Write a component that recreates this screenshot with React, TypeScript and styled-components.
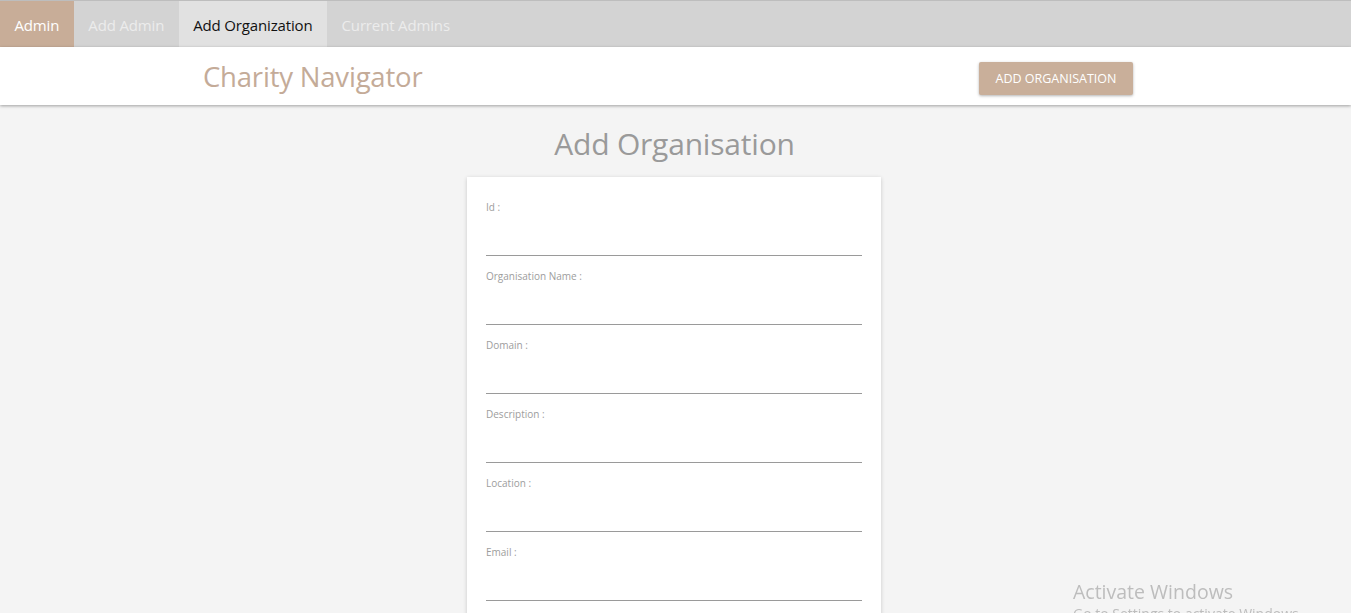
import React from "react";
import styled, { createGlobalStyle } from "styled-components";

const Global = createGlobalStyle`
  html, body { margin: 0; padding: 0; }
  body {
    background: #f4f4f4;
    font-family: "Open Sans", "Noto Sans", sans-serif;
    overflow: hidden;
  }
  * { box-sizing: border-box; }
`;

const NavBar = styled.nav`
  display: flex;
  height: 47px;
  background: #d3d3d3;
  border-top: 1px solid #bdbdbd;
`;

const Tab = styled.a<{ $variant?: "brand" | "active" | "idle" }>`
  display: flex;
  align-items: center;
  padding: 1px 14.5px 0;
  font-size: 15px;
  letter-spacing: -0.15px;
  text-decoration: none;
  cursor: pointer;
  background: ${(p) =>
    p.$variant === "brand" ? "#c8ad98" : p.$variant === "active" ? "#e1e1e1" : "transparent"};
  color: ${(p) =>
    p.$variant === "brand" ? "#ffffff" : p.$variant === "active" ? "#111111" : "#ececec"};
`;

const Header = styled.header`
  display: flex;
  align-items: center;
  justify-content: space-between;
  height: 58px;
  padding: 0 218px 0 203px;
  background: #ffffff;
  box-shadow: 0 1px 3px rgba(0, 0, 0, 0.35);
  position: relative;
  z-index: 1;
`;

const Brand = styled.div`
  font-size: 27.5px;
  color: #c4ab98;
  letter-spacing: -0.2px;
  margin-top: 1px;
`;

const PrimaryButton = styled.button`
  width: 154px;
  height: 33px;
  margin-top: 4px;
  border: none;
  border-radius: 2px;
  background: #c9af9a;
  color: #ffffff;
  font-family: inherit;
  font-size: 12.5px;
  text-transform: uppercase;
  box-shadow: 0 1px 3px rgba(0, 0, 0, 0.3);
  cursor: pointer;
`;

const Main = styled.main`
  display: flex;
  flex-direction: column;
  align-items: center;
  padding-top: 19px;
`;

const Title = styled.h1`
  margin: 0 0 13px;
  font-size: 30px;
  font-weight: 400;
  line-height: 40px;
  color: #9a9a9a;
  letter-spacing: -0.2px;
  margin-left: -2px;
`;

const Card = styled.form`
  width: 414px;
  margin-left: -3px;
  padding: 22px 19px 30px;
  background: #ffffff;
  box-shadow: 0 1px 4px rgba(0, 0, 0, 0.18);
  display: flex;
  flex-direction: column;
  gap: 12px;
`;

const Field = styled.label`
  display: flex;
  flex-direction: column;
`;

const Label = styled.span`
  font-size: 10px;
  line-height: 16px;
  color: #9d9d9d;
`;

const Input = styled.input`
  height: 41px;
  border: none;
  border-bottom: 1px solid #9a9a9a;
  background: transparent;
  outline: none;
  font-family: inherit;
  font-size: 13px;
  padding: 0;
`;

const Watermark = styled.div`
  position: fixed;
  left: 1073px;
  top: 581px;
  color: #bdbdbd;
  pointer-events: none;
  line-height: 1;
`;

const WatermarkTitle = styled.div`
  font-size: 19.5px;
  line-height: 22px;
`;

const WatermarkSub = styled.div`
  font-size: 14px;
  line-height: 18px;
  margin-top: 2px;
`;

const fields = ["Id :", "Organisation Name :", "Domain :", "Description :", "Location :", "Email :"];

export default function App() {
  return (
    <>
      <Global />
      <NavBar>
        <Tab $variant="brand">Admin</Tab>
        <Tab>Add Admin</Tab>
        <Tab $variant="active">Add Organization</Tab>
        <Tab>Current Admins</Tab>
      </NavBar>
      <Header>
        <Brand>Charity Navigator</Brand>
        <PrimaryButton type="button">Add Organisation</PrimaryButton>
      </Header>
      <Main>
        <Title>Add Organisation</Title>
        <Card>
          {fields.map((f) => (
            <Field key={f}>
              <Label>{f}</Label>
              <Input type="text" />
            </Field>
          ))}
        </Card>
      </Main>
      <Watermark>
        <WatermarkTitle>Activate Windows</WatermarkTitle>
        <WatermarkSub>Go to Settings to activate Windows.</WatermarkSub>
      </Watermark>
    </>
  );
}
